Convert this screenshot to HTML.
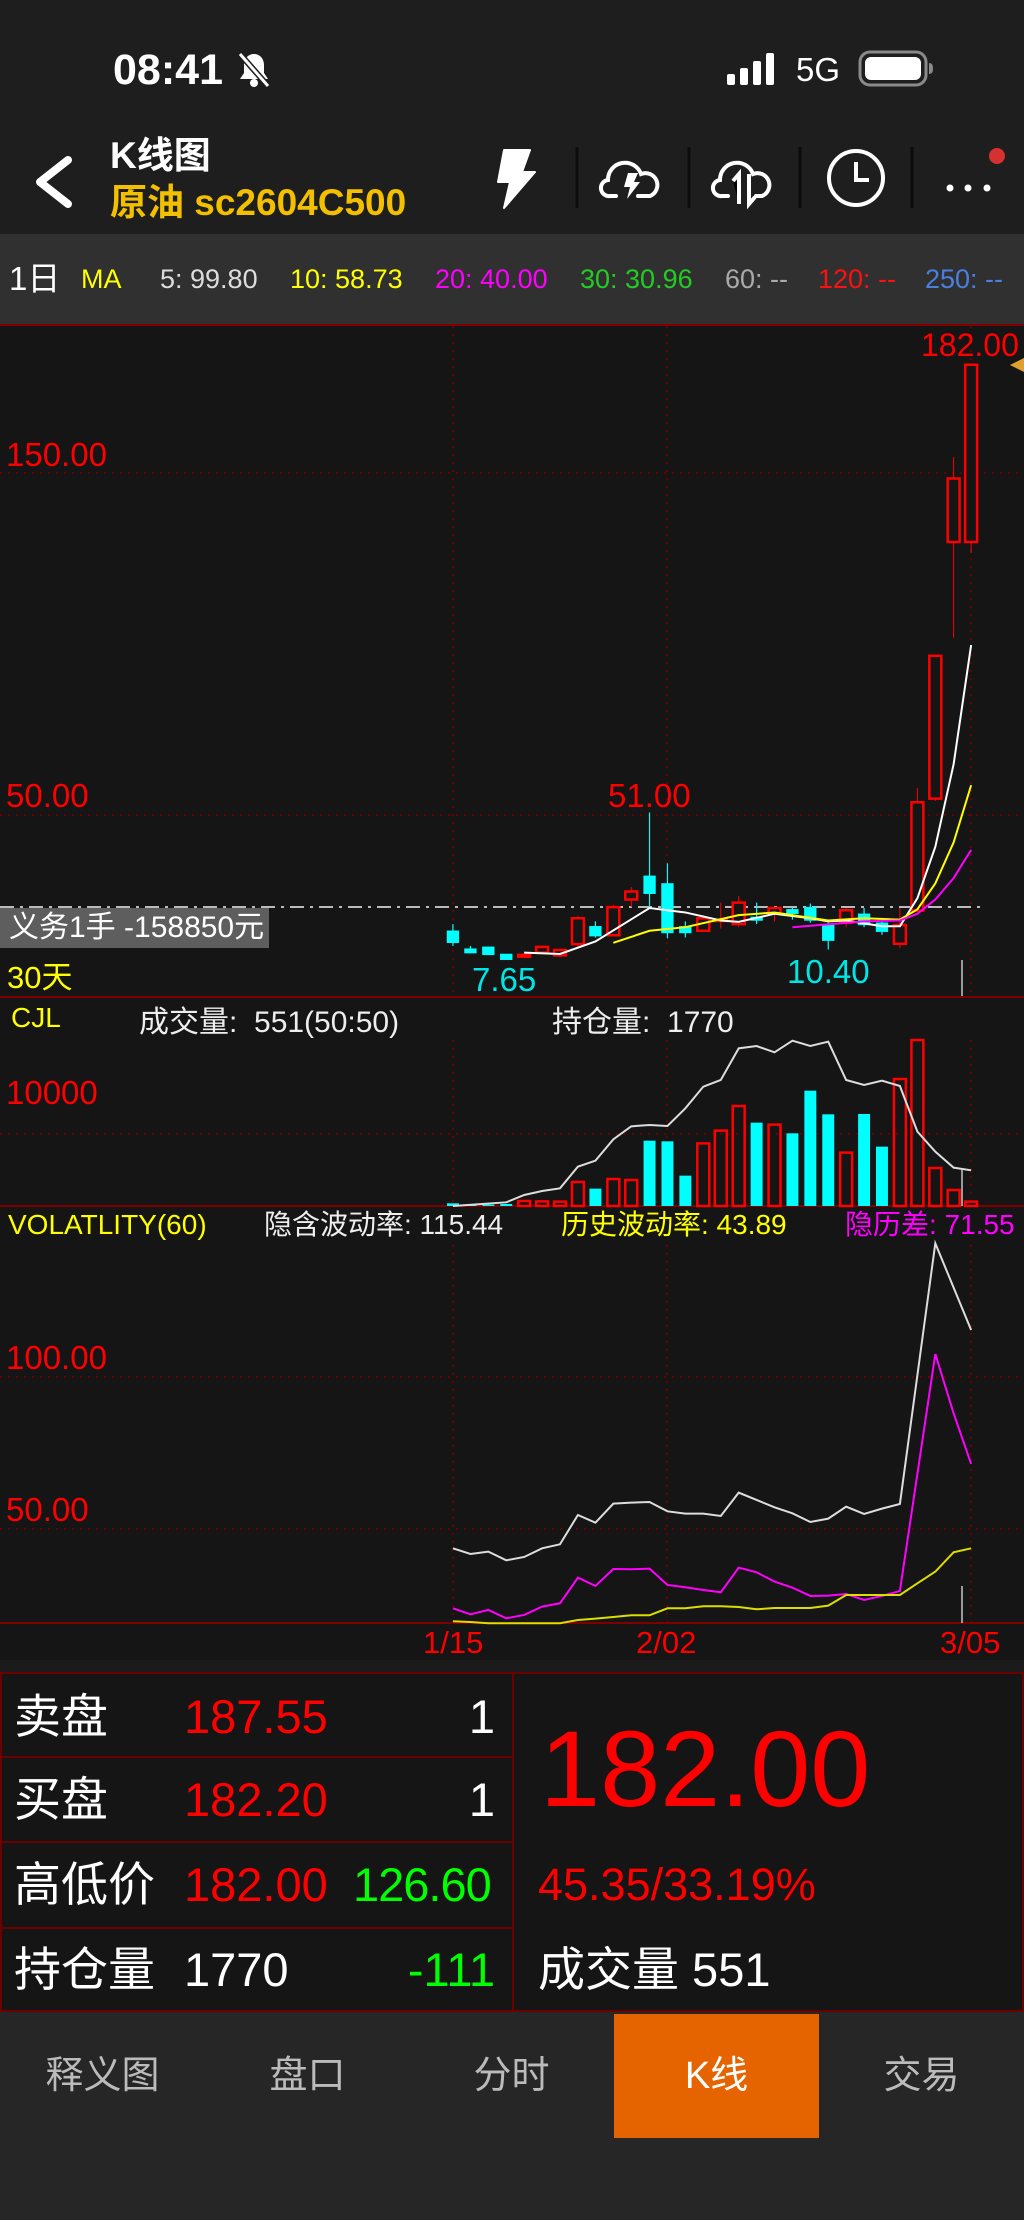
<!DOCTYPE html>
<html><head><meta charset="utf-8">
<style>
*{margin:0;padding:0;box-sizing:border-box}
body{width:1024px;height:2220px;background:#151515;position:relative;overflow:hidden;font-family:"Liberation Sans","Noto Sans CJK SC",sans-serif;color:#fff}
.a{position:absolute;white-space:nowrap}
</style></head><body>
<!-- top -->
<div class="a" style="left:0;top:0;width:1024px;height:234px;background:#1e1e1e"></div>
<div class="a" style="left:113px;top:45px;font-size:43px;font-weight:bold;line-height:50px;color:#fff">08:41</div>
<svg class="a" style="left:234px;top:50px" width="40" height="40" viewBox="0 0 40 40"><path d="M20 4c-6 0-10 5-10 11v8l-4 6h28l-4-6v-8c0-6-4-11-10-11z" fill="#fff"/><circle cx="20" cy="33" r="4" fill="#fff"/><path d="M6 4L34 36" stroke="#1e1e1e" stroke-width="6"/><path d="M6 4L34 36" stroke="#fff" stroke-width="3"/></svg>
<svg class="a" style="left:725px;top:52px" width="56" height="34"><rect x="2" y="22" width="8" height="11" rx="2" fill="#fff"/><rect x="15" y="16" width="8" height="17" rx="2" fill="#fff"/><rect x="28" y="9" width="8" height="24" rx="2" fill="#fff"/><rect x="41" y="1" width="8" height="32" rx="2" fill="#fff"/></svg>
<div class="a" style="left:796px;top:50px;font-size:33px;line-height:40px;color:#fff">5G</div>
<svg class="a" style="left:858px;top:50px" width="78" height="38"><rect x="2" y="2" width="66" height="33" rx="10" fill="none" stroke="#8a8a8a" stroke-width="3"/><rect x="7" y="7" width="56" height="23" rx="6" fill="#fff"/><path d="M71 13v11c3 0 4-2 4-5.5S74 13 71 13z" fill="#8a8a8a"/></svg>
<svg class="a" style="left:30px;top:154px" width="46" height="56"><path d="M38 6L10 28l28 22" fill="none" stroke="#fff" stroke-width="8" stroke-linecap="round" stroke-linejoin="round"/></svg>
<div class="a" style="left:110px;top:134px;font-size:37px;font-weight:bold;line-height:44px;color:#fff">K线图</div>
<div class="a" style="left:110px;top:181px;font-size:37px;font-weight:bold;line-height:44px;color:#f2c000">原油 sc2604C500</div>
<svg class="a" style="left:490px;top:140px" width="534" height="80">
<path d="M14 10h26l-8 22h13L14 68l6-26H8z" fill="#fff" stroke="#fff" stroke-width="2" stroke-linejoin="round"/>
<g stroke="#0c0c0c" stroke-width="3"><line x1="87" y1="7" x2="87" y2="68"/><line x1="199" y1="7" x2="199" y2="68"/><line x1="310" y1="7" x2="310" y2="68"/><line x1="422" y1="7" x2="422" y2="68"/></g>
<g fill="none" stroke="#fff" stroke-width="4" stroke-linecap="round"><path d="M126 56h-6a8 8 0 0 1-2-16a17 17 0 0 1 33-6a11 11 0 0 1 9 22h-12"/><path d="M238 56h-6a8 8 0 0 1-2-16a17 17 0 0 1 33-6a11 11 0 0 1 9 22h-6"/></g>
<path d="M138 33h10l-4 9h6l-13 17 3-12h-6z" fill="#fff"/>
<g stroke="#fff" stroke-width="4"><path d="M249 64V34l-6 7"/><path d="M259 34v30l6-7" fill="none"/></g>
<circle cx="366" cy="38" r="27" fill="none" stroke="#fff" stroke-width="4"/><path d="M366 22v18h13" fill="none" stroke="#fff" stroke-width="4"/>
<circle cx="460" cy="48" r="3.5" fill="#fff"/><circle cx="478" cy="48" r="3.5" fill="#fff"/><circle cx="497" cy="48" r="3.5" fill="#fff"/><circle cx="507" cy="16" r="8" fill="#d63030"/>
</svg>
<!-- MA bar -->
<div class="a" style="left:0;top:234px;width:1024px;height:90px;background:#303030"></div>
<div class="a" style="left:9px;top:259px;font-size:33px;line-height:40px;color:#fff">1日</div>
<div class="a" style="left:81px;top:263px;font-size:27px;line-height:32px;color:#ffff00">MA</div>
<div class="a" style="left:160px;top:263px;font-size:27px;line-height:32px;color:#ddd">5: 99.80</div>
<div class="a" style="left:290px;top:263px;font-size:27px;line-height:32px;color:#ffff00">10: 58.73</div>
<div class="a" style="left:435px;top:263px;font-size:27px;line-height:32px;color:#ff00ff">20: 40.00</div>
<div class="a" style="left:580px;top:263px;font-size:27px;line-height:32px;color:#22cc22">30: 30.96</div>
<div class="a" style="left:725px;top:263px;font-size:27px;line-height:32px;color:#aaa">60: --</div>
<div class="a" style="left:818px;top:263px;font-size:27px;line-height:32px;color:#ff1010">120: --</div>
<div class="a" style="left:925px;top:263px;font-size:27px;line-height:32px;color:#4a7fe0">250: --</div>

<svg class="a" style="left:0;top:0" width="1024" height="2220">
<g stroke="#6a0000" stroke-width="2" stroke-dasharray="2 6">
<line x1="453" y1="326" x2="453" y2="996"/><line x1="667" y1="326" x2="667" y2="996"/><line x1="971" y1="326" x2="971" y2="996"/>
<line x1="0" y1="473" x2="1024" y2="473"/><line x1="0" y1="815" x2="1024" y2="815"/>
<line x1="453" y1="1040" x2="453" y2="1206"/><line x1="667" y1="1040" x2="667" y2="1206"/><line x1="971" y1="1040" x2="971" y2="1206"/>
<line x1="0" y1="1134" x2="1024" y2="1134"/>
<line x1="453" y1="1245" x2="453" y2="1623"/><line x1="667" y1="1245" x2="667" y2="1623"/><line x1="971" y1="1245" x2="971" y2="1623"/>
<line x1="0" y1="1377" x2="1024" y2="1377"/><line x1="0" y1="1529" x2="1024" y2="1529"/>
</g>
<g stroke="#800000" stroke-width="2"><line x1="0" y1="325" x2="1024" y2="325"/><line x1="0" y1="997" x2="1024" y2="997"/><line x1="0" y1="1206" x2="1024" y2="1206"/><line x1="0" y1="1623" x2="1024" y2="1623"/></g>
<line x1="0" y1="907" x2="980" y2="907" stroke="#bbb" stroke-width="2" stroke-dasharray="14 6 3 6"/>
<g stroke="#999" stroke-width="2"><line x1="962" y1="960" x2="962" y2="996"/><line x1="962" y1="1170" x2="962" y2="1206"/><line x1="962" y1="1586" x2="962" y2="1623"/></g>
<!-- candles -->
<g transform="translate(400,300) scale(0.398,0.4464)">
<g stroke="#00ffff" fill="#00ffff" vector-effect="non-scaling-stroke">
<line x1="133" y1="1398" x2="133" y2="1447" stroke-width="3"/><rect x="118" y="1413" width="30" height="27"/>
<line x1="177" y1="1447" x2="177" y2="1463" stroke-width="3"/><rect x="162" y="1453" width="30" height="10"/>
<rect x="207" y="1449" width="30" height="18"/>
<rect x="252" y="1465" width="30" height="13"/>
<line x1="491" y1="1392" x2="491" y2="1428" stroke-width="3"/><rect x="476" y="1403" width="30" height="22"/>
<line x1="627" y1="1148" x2="627" y2="1362" stroke-width="3"/><rect x="612" y="1290" width="30" height="40"/>
<line x1="672" y1="1262" x2="672" y2="1430" stroke-width="3"/><rect x="657" y="1307" width="30" height="111"/>
<line x1="717" y1="1392" x2="717" y2="1428" stroke-width="3"/><rect x="702" y="1403" width="30" height="15"/>
<line x1="896" y1="1350" x2="896" y2="1398" stroke-width="3"/><rect x="881" y="1382" width="30" height="8"/>
<line x1="986" y1="1360" x2="986" y2="1388" stroke-width="3"/><rect x="971" y="1365" width="30" height="10"/>
<line x1="1031" y1="1352" x2="1031" y2="1395" stroke-width="3"/><rect x="1016" y="1360" width="30" height="30"/>
<line x1="1076" y1="1395" x2="1076" y2="1455" stroke-width="3"/><rect x="1061" y="1400" width="30" height="35"/>
<line x1="1166" y1="1362" x2="1166" y2="1405" stroke-width="3"/><rect x="1151" y="1375" width="30" height="25"/>
<line x1="1211" y1="1390" x2="1211" y2="1422" stroke-width="3"/><rect x="1196" y="1395" width="30" height="20"/>
</g>
<g stroke="#ff0000" fill="#151515" stroke-width="2.5">
<line x1="312" y1="1462" x2="312" y2="1474"/><rect x="297" y="1467" width="30" height="4" vector-effect="non-scaling-stroke"/>
<rect x="342" y="1449" width="30" height="13" vector-effect="non-scaling-stroke"/>
<line x1="402" y1="1456" x2="402" y2="1472"/><rect x="387" y="1456" width="30" height="12" vector-effect="non-scaling-stroke"/>
<line x1="447" y1="1380" x2="447" y2="1448"/><rect x="432" y="1385" width="30" height="58" vector-effect="non-scaling-stroke"/>
<line x1="536" y1="1355" x2="536" y2="1425"/><rect x="521" y="1360" width="30" height="63" vector-effect="non-scaling-stroke"/>
<line x1="581" y1="1315" x2="581" y2="1360"/><rect x="566" y="1325" width="30" height="18" vector-effect="non-scaling-stroke"/>
<line x1="762" y1="1378" x2="762" y2="1413"/><rect x="747" y="1385" width="30" height="28" vector-effect="non-scaling-stroke"/>
<line x1="806" y1="1350" x2="806" y2="1408"/><rect x="791" y="1388" width="30" height="3" vector-effect="non-scaling-stroke"/>
<line x1="851" y1="1335" x2="851" y2="1405"/><rect x="836" y="1350" width="30" height="48" vector-effect="non-scaling-stroke"/>
<line x1="941" y1="1362" x2="941" y2="1392"/><rect x="926" y="1362" width="30" height="13" vector-effect="non-scaling-stroke"/>
<line x1="1121" y1="1362" x2="1121" y2="1405"/><rect x="1106" y="1367" width="30" height="28" vector-effect="non-scaling-stroke"/>
<line x1="1256" y1="1362" x2="1256" y2="1452"/><rect x="1241" y="1400" width="30" height="42" vector-effect="non-scaling-stroke"/>
<line x1="1300" y1="1093" x2="1300" y2="1368"/><rect x="1285" y="1125" width="30" height="243" vector-effect="non-scaling-stroke"/>
<line x1="1345" y1="797" x2="1345" y2="1122"/><rect x="1330" y="797" width="30" height="320" vector-effect="non-scaling-stroke"/>
<line x1="1391" y1="352" x2="1391" y2="757"/><rect x="1376" y="400" width="30" height="142" vector-effect="non-scaling-stroke"/>
<line x1="1435" y1="145" x2="1435" y2="567"/><rect x="1420" y="145" width="30" height="397" vector-effect="non-scaling-stroke"/>
</g>
<g fill="none" stroke-width="2">
<polyline vector-effect="non-scaling-stroke" stroke="#ffffff" points="312,1462 402,1465 491,1437 627,1362 717,1372 806,1390 851,1393 941,1375 1031,1385 1076,1392 1121,1390 1211,1403 1256,1403 1300,1340 1345,1225 1391,1040 1435,773"/>
<polyline vector-effect="non-scaling-stroke" stroke="#ffff00" points="536,1440 627,1413 717,1405 851,1378 941,1372 1076,1390 1166,1385 1256,1388 1300,1365 1345,1307 1391,1215 1435,1087"/>
<polyline vector-effect="non-scaling-stroke" stroke="#ff00ff" points="986,1405 1166,1392 1256,1390 1300,1375 1345,1343 1391,1295 1435,1232"/>
</g>
</g>
<path d="M1024 358l-14 7 14 7z" fill="#e0a030"/>
<!-- volume -->
<g transform="translate(400,1000) scale(0.398,0.3333)">
<g fill="#00ffff">
<rect x="118" y="610" width="30" height="8"/><rect x="162" y="614" width="30" height="4"/><rect x="207" y="614" width="30" height="4"/><rect x="252" y="612" width="30" height="6"/>
<rect x="476" y="566" width="30" height="52"/><rect x="612" y="422" width="30" height="196"/><rect x="657" y="424" width="30" height="194"/><rect x="702" y="527" width="30" height="91"/>
<rect x="881" y="368" width="30" height="250"/><rect x="971" y="400" width="30" height="218"/><rect x="1016" y="272" width="30" height="346"/><rect x="1061" y="343" width="30" height="275"/>
<rect x="1151" y="342" width="30" height="276"/><rect x="1196" y="440" width="30" height="178"/>
</g>
<g fill="none" stroke="#ff0000" stroke-width="2.5">
<rect vector-effect="non-scaling-stroke" x="297" y="603" width="30" height="15"/><rect vector-effect="non-scaling-stroke" x="342" y="604" width="30" height="14"/><rect vector-effect="non-scaling-stroke" x="387" y="605" width="30" height="13"/>
<rect vector-effect="non-scaling-stroke" x="432" y="546" width="30" height="72"/><rect vector-effect="non-scaling-stroke" x="521" y="537" width="30" height="81"/><rect vector-effect="non-scaling-stroke" x="566" y="540" width="30" height="78"/>
<rect vector-effect="non-scaling-stroke" x="747" y="430" width="30" height="188"/><rect vector-effect="non-scaling-stroke" x="791" y="392" width="30" height="226"/><rect vector-effect="non-scaling-stroke" x="836" y="318" width="30" height="300"/>
<rect vector-effect="non-scaling-stroke" x="926" y="374" width="30" height="244"/><rect vector-effect="non-scaling-stroke" x="1106" y="458" width="30" height="160"/><rect vector-effect="non-scaling-stroke" x="1241" y="237" width="30" height="381"/>
<rect vector-effect="non-scaling-stroke" x="1285" y="120" width="30" height="498"/><rect vector-effect="non-scaling-stroke" x="1330" y="504" width="30" height="114"/><rect vector-effect="non-scaling-stroke" x="1376" y="570" width="30" height="48"/><rect vector-effect="non-scaling-stroke" x="1420" y="605" width="30" height="13"/>
</g>
<polyline vector-effect="non-scaling-stroke" fill="none" stroke="#ddd" stroke-width="2" points="133,618 267,607 312,585 357,573 402,565 447,500 491,482 536,418 581,379 627,375 672,378 717,325 762,260 806,240 851,145 896,138 941,157 986,122 1031,138 1076,125 1121,240 1166,255 1211,242 1256,258 1300,395 1345,455 1391,503 1435,511"/>
</g>
<!-- volatility -->
<g transform="translate(400,1220) scale(0.398,0.3333)" fill="none" stroke-width="2">
<polyline vector-effect="non-scaling-stroke" stroke="#ddd" points="133,985 177,1002 222,995 267,1021 312,1011 357,985 402,973 447,885 491,908 536,851 581,848 627,846 672,874 717,881 762,881 806,888 851,818 896,840 941,862 986,880 1031,906 1076,896 1121,860 1166,882 1211,866 1256,852 1345,70 1435,330"/>
<polyline vector-effect="non-scaling-stroke" stroke="#ff00ff" points="133,1165 177,1183 222,1170 267,1195 312,1185 357,1160 402,1150 447,1073 491,1098 536,1047 581,1048 627,1046 672,1095 717,1102 762,1110 806,1117 851,1043 896,1057 941,1085 986,1103 1031,1128 1076,1127 1121,1122 1166,1140 1211,1128 1256,1113 1345,402 1391,580 1435,732"/>
<polyline vector-effect="non-scaling-stroke" stroke="#dddd00" points="133,1204 177,1206 222,1210 402,1210 447,1200 491,1196 536,1191 581,1186 627,1186 672,1165 717,1165 762,1159 806,1159 851,1161 896,1168 941,1164 986,1164 1031,1164 1076,1157 1121,1125 1256,1125 1300,1090 1345,1055 1391,997 1435,985"/>
</g>
</svg>
<!-- chart labels -->
<div class="a" style="left:6px;top:436px;font-size:33px;line-height:38px;color:#ff0000">150.00</div>
<div class="a" style="left:6px;top:777px;font-size:33px;line-height:38px;color:#ff0000">50.00</div>
<div class="a" style="left:921px;top:326px;font-size:32px;line-height:38px;color:#ff0000">182.00</div>
<div class="a" style="left:608px;top:777px;font-size:33px;line-height:38px;color:#ff0000">51.00</div>
<div class="a" style="left:472px;top:961px;font-size:33px;line-height:38px;color:#00e5e5">7.65</div>
<div class="a" style="left:787px;top:953px;font-size:33px;line-height:38px;color:#00e5e5">10.40</div>
<div class="a" style="left:0;top:908px;width:269px;height:40px;background:#5e5e5e"></div>
<div class="a" style="left:9px;top:909px;font-size:30px;line-height:38px;color:#fff">义务1手 -158850元</div>
<div class="a" style="left:7px;top:959px;font-size:31px;line-height:38px;color:#ffff00">30天</div>
<div class="a" style="left:11px;top:1002px;font-size:28px;line-height:32px;color:#ffff00">CJL</div>
<div class="a" style="left:139px;top:1006px;font-size:30px;line-height:34px;color:#eee">成交量:&nbsp; 551(50:50)</div>
<div class="a" style="left:552px;top:1006px;font-size:30px;line-height:34px;color:#eee">持仓量:&nbsp; 1770</div>
<div class="a" style="left:6px;top:1074px;font-size:33px;line-height:38px;color:#ff0000">10000</div>
<div class="a" style="left:8px;top:1209px;font-size:28px;line-height:32px;color:#ffff00">VOLATLITY(60)</div>
<div class="a" style="left:264px;top:1209px;font-size:28px;line-height:32px;color:#eee">隐含波动率: 115.44</div>
<div class="a" style="left:561px;top:1209px;font-size:28px;line-height:32px;color:#ffff00">历史波动率: 43.89</div>
<div class="a" style="left:845px;top:1209px;font-size:28px;line-height:32px;color:#ff00ff">隐历差: 71.55</div>
<div class="a" style="left:6px;top:1339px;font-size:33px;line-height:38px;color:#ff0000">100.00</div>
<div class="a" style="left:6px;top:1491px;font-size:33px;line-height:38px;color:#ff0000">50.00</div>
<div class="a" style="left:423px;top:1625px;font-size:31px;line-height:36px;color:#ff0000">1/15</div>
<div class="a" style="left:636px;top:1625px;font-size:31px;line-height:36px;color:#ff0000">2/02</div>
<div class="a" style="left:940px;top:1625px;font-size:31px;line-height:36px;color:#ff0000">3/05</div>
<!-- quote panel -->
<div class="a" style="left:0;top:1660px;width:1024px;height:12px;background:#1b1b1b"></div>
<div class="a" style="left:0;top:1672px;width:1024px;height:340px;border:2px solid #6a0000;background:#151515"></div>
<div class="a" style="left:512px;top:1672px;width:2px;height:340px;background:#6a0000"></div>
<div class="a" style="left:0;top:1756px;width:513px;height:2px;background:#6a0000"></div>
<div class="a" style="left:0;top:1841px;width:513px;height:2px;background:#6a0000"></div>
<div class="a" style="left:0;top:1927px;width:513px;height:2px;background:#6a0000"></div>
<div class="a" style="left:14px;top:1690px;font-size:47px;line-height:54px;color:#fff">卖盘</div>
<div class="a" style="left:184px;top:1690px;font-size:47px;line-height:54px;color:#ff0000">187.55</div>
<div class="a" style="left:440px;top:1690px;width:55px;text-align:right;font-size:47px;line-height:54px;color:#fff">1</div>
<div class="a" style="left:14px;top:1773px;font-size:47px;line-height:54px;color:#fff">买盘</div>
<div class="a" style="left:184px;top:1773px;font-size:47px;line-height:54px;color:#ff0000">182.20</div>
<div class="a" style="left:440px;top:1773px;width:55px;text-align:right;font-size:47px;line-height:54px;color:#fff">1</div>
<div class="a" style="left:14px;top:1858px;font-size:47px;line-height:54px;color:#fff">高低价</div>
<div class="a" style="left:184px;top:1858px;font-size:47px;line-height:54px;color:#ff0000">182.00</div>
<div class="a" style="left:353px;top:1858px;font-size:47px;line-height:54px;color:#00ff00;letter-spacing:-1px">126.60</div>
<div class="a" style="left:14px;top:1943px;font-size:47px;line-height:54px;color:#fff">持仓量</div>
<div class="a" style="left:184px;top:1943px;font-size:47px;line-height:54px;color:#fff">1770</div>
<div class="a" style="left:395px;top:1943px;width:100px;text-align:right;font-size:47px;line-height:54px;color:#00ff00">-111</div>
<div class="a" style="left:540px;top:1708px;font-size:108px;line-height:122px;color:#ff0000">182.00</div>
<div class="a" style="left:538px;top:1858px;font-size:45px;line-height:54px;color:#ff0000">45.35/33.19%</div>
<div class="a" style="left:538px;top:1943px;font-size:47px;line-height:54px;color:#fff">成交量 551</div>
<!-- tabs -->
<div class="a" style="left:0;top:2012px;width:1024px;height:208px;background:#262626"></div>
<div class="a" style="left:614px;top:2014px;width:205px;height:124px;background:#e66400"></div>
<div class="a" style="left:0;top:2053px;width:205px;text-align:center;font-size:38px;line-height:46px;color:#bbb">释义图</div>
<div class="a" style="left:205px;top:2053px;width:205px;text-align:center;font-size:38px;line-height:46px;color:#bbb">盘口</div>
<div class="a" style="left:409px;top:2053px;width:205px;text-align:center;font-size:38px;line-height:46px;color:#bbb">分时</div>
<div class="a" style="left:614px;top:2053px;width:205px;text-align:center;font-size:38px;line-height:46px;color:#fff">K线</div>
<div class="a" style="left:819px;top:2053px;width:205px;text-align:center;font-size:38px;line-height:46px;color:#bbb">交易</div>
</body></html>
